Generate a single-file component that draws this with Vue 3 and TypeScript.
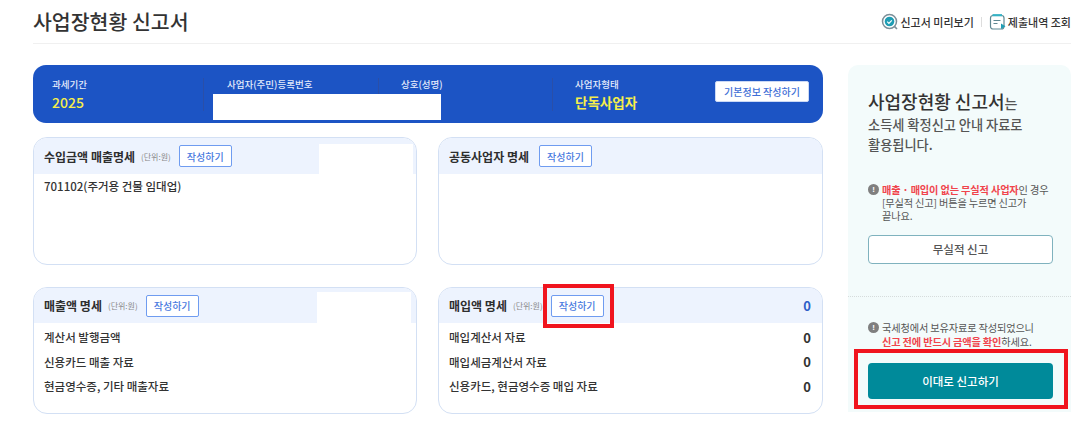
<script setup lang="ts">
interface Row { label: string; value?: string }
interface Card { title: string; unit?: string; total?: string; rows: Row[]; patch?: boolean; marked?: boolean; cls: string }

const cards: Card[] = [
  { title: '수입금액 매출명세', unit: '(단위:원)', rows: [{ label: '701102(주거용 건물 임대업)' }], patch: true, cls: 'c1' },
  { title: '공동사업자 명세', rows: [], cls: 'c2' },
  { title: '매출액 명세', unit: '(단위:원)', rows: [{ label: '계산서 발행금액' }, { label: '신용카드 매출 자료' }, { label: '현금영수증, 기타 매출자료' }], patch: true, cls: 'c3' },
  { title: '매입액 명세', unit: '(단위:원)', total: '0', rows: [{ label: '매입계산서 자료', value: '0' }, { label: '매입세금계산서 자료', value: '0' }, { label: '신용카드, 현금영수증 매입 자료', value: '0' }], marked: true, cls: 'c4' },
]
</script>

<template>
  <div class="page">
    <header class="top">
      <h1>사업장현황 신고서</h1>
      <nav class="links">
        <a class="link">
          <svg width="18" height="18" viewBox="0 0 18 18">
            <circle cx="8.5" cy="8.5" r="7" fill="#fff" stroke="#7c8f99" stroke-width="1.5" />
            <circle cx="8.5" cy="8.5" r="4.8" fill="#1f9db4" />
            <path d="M6.2 8.6l1.7 1.7 2.9-3" fill="none" stroke="#fff" stroke-width="1.2" />
            <path d="M13.4 13.4l2.6 2.6" stroke="#7c8f99" stroke-width="1.6" />
          </svg>
          신고서 미리보기
        </a>
        <span class="sep"></span>
        <a class="link">
          <svg width="18" height="18" viewBox="0 0 18 18">
            <rect x="1.5" y="2.5" width="13.5" height="13.5" rx="2.5" fill="#fff" stroke="#5f8791" stroke-width="1.2" />
            <path d="M3.5 2.2h9.5" stroke="#35b2c4" stroke-width="2.2" />
            <path d="M4.5 7.5h7M4.5 10.5h4" stroke="#5f8791" stroke-width="1.1" />
            <path d="M12 10.5l4.5 2.7-4.5 2.7z" fill="#1f9db4" />
          </svg>
          제출내역 조회
        </a>
      </nav>
    </header>

    <div class="layout">
      <main class="content">
        <section class="banner">
          <div class="col col-period"><span class="lbl">과세기간</span><strong class="val">2025</strong></div>
          <div class="col col-id"><span class="lbl">사업자(주민)등록번호</span></div>
          <div class="col col-name"><span class="lbl">상호(성명)</span></div>
          <div class="col col-type"><span class="lbl">사업자형태</span><strong class="val">단독사업자</strong></div>
          <button class="btn-basic">기본정보 작성하기</button>
          <span class="patch patch-banner"></span>
        </section>

        <div class="cards">
          <section v-for="c in cards" :key="c.title" class="card" :class="c.cls">
            <div class="card-head">
              <span class="card-title">{{ c.title }}</span>
              <span v-if="c.unit" class="unit">{{ c.unit }}</span>
              <button class="btn-write">작성하기</button>
              <span v-if="c.total" class="total">{{ c.total }}</span>
              <span v-if="c.patch" class="patch patch-card"></span>
              <span v-if="c.marked" class="mark mark-write"></span>
            </div>
            <ul class="rows">
              <li v-for="r in c.rows" :key="r.label">
                <span>{{ r.label }}</span><b v-if="r.value">{{ r.value }}</b>
              </li>
            </ul>
          </section>
        </div>
      </main>

      <aside class="side">
        <div class="side-top">
          <p class="lead"><strong>사업장현황 신고서</strong><small>는</small><br />소득세 확정신고 안내 자료로<br />활용됩니다.</p>
          <p class="note note-a">
            <i class="bang">!</i>
            <span><em>매출 · 매입이 없는 무실적 사업자</em>인 경우<br />[무실적 신고] 버튼을 누르면 신고가<br />끝나요.</span>
          </p>
          <button class="btn-zero">무실적 신고</button>
        </div>
        <div class="side-bottom">
          <p class="note note-b">
            <i class="bang">!</i>
            <span>국세청에서 보유자료로 작성되었으니<br /><em>신고 전에 반드시 금액을 확인</em>하세요.</span>
          </p>
          <button class="btn-submit">이대로 신고하기</button>
          <span class="mark mark-submit"></span>
        </div>
      </aside>
    </div>
  </div>
</template>

<style>
html, body { margin: 0; background: #fff; }
</style>

<style scoped>
.page {
  width: 1083px;
  height: 438px;
  overflow: hidden;
  box-sizing: border-box;
  padding: 0 12px 0 33px;
  font-family: "Noto Sans CJK KR", "Noto Sans", sans-serif;
  color: #2b2b2b;
}
.top {
  height: 44px;
  box-sizing: border-box;
  border-bottom: 1px solid #f0f0f0;
  display: flex;
  align-items: center;
  justify-content: space-between;
}
h1 { margin: 0; font-size: 20.5px; font-weight: 500; line-height: 43px; color: #333; }
.links { display: flex; align-items: center; gap: 7px; }
.link { display: flex; align-items: center; gap: 1px; font-size: 11px; font-weight: 500; color: #333; }
.sep { width: 1px; height: 10px; background: #ddd; }

.layout { display: flex; gap: 25px; padding-top: 21px; }
.content { width: 790px; flex: none; }
.banner {
  position: relative;
  height: 58px;
  box-sizing: border-box;
  border-radius: 13px;
  background: #1c54c4;
  display: flex;
  align-items: center;
  color: #fff;
}
.col { height: 33px; box-sizing: border-box; display: flex; flex-direction: column; border-right: 1px solid #2a4fa8; }
.col-period { width: 171px; padding-left: 19px; }
.col-id { width: 175px; padding-left: 23px; }
.col-name { width: 174px; padding-left: 22px; }
.col-type { width: 162px; padding-left: 22px; border-right: 0; }
.lbl { font-size: 9.5px; line-height: 13px; font-weight: 500; color: #e4ebfb; }
.val { font-size: 13.5px; line-height: 22px; font-weight: 700; color: #f6ee4a; }
.col-period .val { font-size: 14px; font-weight: 500; }
.btn-basic {
  width: 94px; height: 21px; padding: 0;
  border: 1px solid #cbd9f5; border-radius: 2px; background: #fff;
  font: 500 10px "Noto Sans CJK KR", sans-serif; color: #3f6fd6;
  margin-top: -6px;
}
.patch { position: absolute; background: #fff; }
.patch-banner { left: 180px; top: 29px; width: 228px; height: 26px; }

.cards { display: grid; grid-template-columns: 384px 385px; column-gap: 21px; row-gap: 22px; margin-top: 14px; }
.card { height: 128px; box-sizing: border-box; border: 1px solid #d3e0f4; border-radius: 14px; overflow: hidden; position: relative; }
.c3, .c4 { height: 127px; overflow: visible; }
.card-head {
  position: relative;
  height: 36px;
  box-sizing: border-box;
  background: #edf3fe;
  display: flex;
  align-items: center;
  padding: 0 11px 0 10px;
  border-radius: 13px 13px 0 0;
}
.c3 .card-head, .c4 .card-head { height: 35px; }
.card-title { font-size: 12px; font-weight: 700; color: #2e2e2e; flex: none; }
.unit { font-size: 8px; color: #888; margin-left: 6px; flex: none; }
.btn-write {
  flex: none;
  width: 53px; height: 22px; padding: 0; margin-left: 8px;
  border: 1px solid #6f9cf0; border-radius: 2px; background: #fff;
  font: 500 10px "Noto Sans CJK KR", sans-serif; color: #4a7be0;
}
.c2 .btn-write { margin-left: 10px; }
.total { margin-left: auto; font-size: 13px; font-weight: 700; color: #2f5fc8; }
.patch-card { top: 6px; right: 3px; width: 94px; height: 30px; }
.c3 .patch-card { top: 4px; right: 5px; height: 31px; }
.rows { list-style: none; margin: 0; padding: 2px 11px 0 10px; }
.c1 .rows { padding-top: 0; }
.rows li { display: flex; justify-content: space-between; align-items: center; height: 24.5px; font-size: 11.5px; font-weight: 500; color: #333; }
.rows b { font-size: 13px; font-weight: 700; }

.mark { position: absolute; border: 4px solid #f0141e; box-sizing: border-box; pointer-events: none; }
.mark-write { left: 104px; top: -4px; width: 71px; height: 44px; }
.mark-submit { left: 6px; top: 52px; width: 214px; height: 60px; }

.side { width: 223px; height: 347px; flex: none; background: #f3fbfb; border-radius: 10px 10px 0 0; }
.side-top { height: 232px; box-sizing: border-box; padding: 26px 18px 0 20px; border-bottom: 1px dotted #d6dcdc; }
.lead { margin: 0; font-size: 13.2px; line-height: 20.5px; color: #555; font-weight: 500; }
.lead strong { font-size: 18px; font-weight: 500; color: #333; }
.lead small { font-size: 14px; }
.note { margin: 0; display: flex; gap: 3px; font-size: 10.2px; line-height: 13px; color: #555; letter-spacing: -0.15px; white-space: nowrap; }
.note em { font-style: normal; font-weight: 700; color: #f0444c; }
.note-a { margin-top: 27px; }
.note-b { line-height: 14px; }
.bang {
  width: 11px; height: 11px; flex: none; margin-top: 1px; border-radius: 50%;
  background: #7f7f7f; color: #fff; font: 700 8px/11px "Liberation Sans", sans-serif; text-align: center;
}
.btn-zero {
  display: block; width: 185px; height: 29px; margin-top: 13px; padding: 0;
  border: 1px solid #7fb2be; border-radius: 4px; background: #fff;
  font: 500 11.5px "Noto Sans CJK KR", sans-serif; color: #555;
}
.side-bottom { position: relative; padding: 24px 18px 0 20px; }
.btn-submit {
  display: block; width: 185px; height: 36px; margin-top: 14px; padding: 0;
  border: 0; border-radius: 4px; background: #008a9a;
  font: 500 11.5px "Noto Sans CJK KR", sans-serif; color: #fff;
}
</style>
